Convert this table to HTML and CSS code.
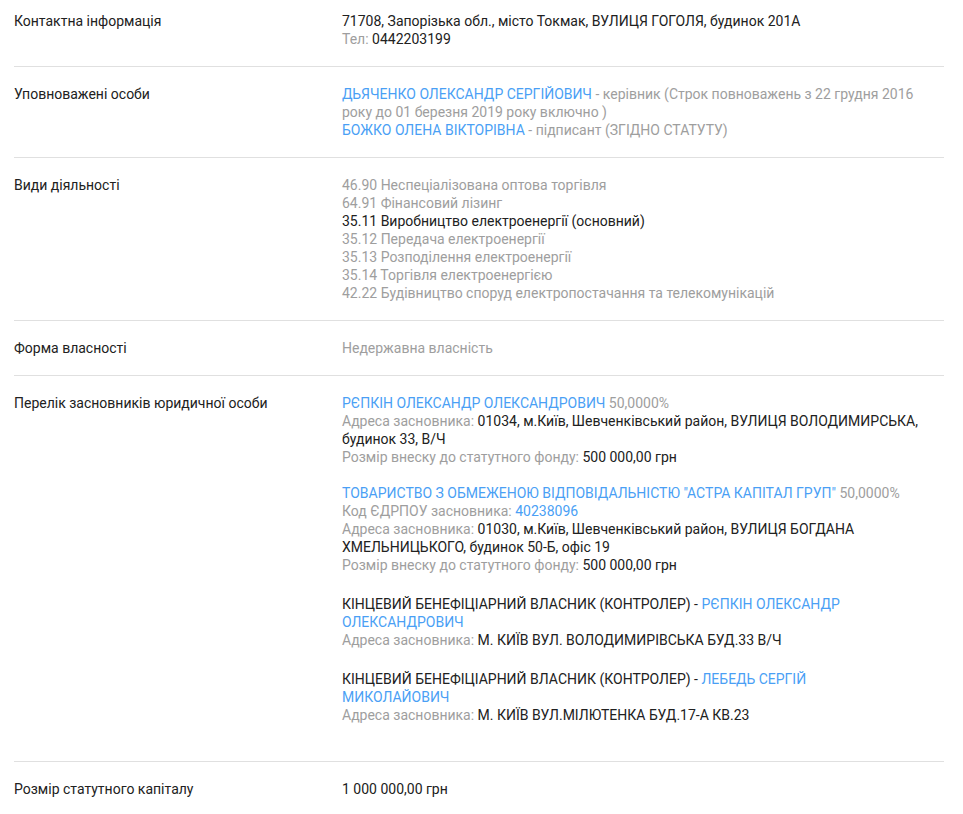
FILE: index.html
```html
<!DOCTYPE html>
<html lang="uk">
<head>
<meta charset="utf-8">
<title>Реєстраційні дані</title>
<link rel="stylesheet" href="styles.css">
</head>
<body>
<div class="table">
  <div class="row first">
    <div class="label">Контактна інформація</div>
    <div class="value">
      <div>71708, Запорізька обл., місто Токмак, ВУЛИЦЯ ГОГОЛЯ, будинок 201А</div>
      <div><span class="muted">Тел:</span> 0442203199</div>
    </div>
  </div>
  <div class="row">
    <div class="label">Уповноважені особи</div>
    <div class="value">
      <div><a class="link" href="#">ДЬЯЧЕНКО ОЛЕКСАНДР СЕРГІЙОВИЧ</a> <span class="muted">- керівник (Строк повноважень з 22 грудня 2016 року до 01 березня 2019 року включно )</span></div>
      <div><a class="link" href="#">БОЖКО ОЛЕНА ВІКТОРІВНА</a> <span class="muted">- підписант (ЗГІДНО СТАТУТУ)</span></div>
    </div>
  </div>
  <div class="row">
    <div class="label">Види діяльності</div>
    <div class="value muted">
      <div>46.90 Неспеціалізована оптова торгівля</div>
      <div>64.91 Фінансовий лізинг</div>
      <div class="main">35.11 Виробництво електроенергії (основний)</div>
      <div>35.12 Передача електроенергії</div>
      <div>35.13 Розподілення електроенергії</div>
      <div>35.14 Торгівля електроенергією</div>
      <div>42.22 Будівництво споруд електропостачання та телекомунікацій</div>
    </div>
  </div>
  <div class="row">
    <div class="label">Форма власності</div>
    <div class="value muted">Недержавна власність</div>
  </div>
  <div class="row">
    <div class="label">Перелік засновників юридичної особи</div>
    <div class="value">
      <div class="founder">
        <div><a class="link" href="#">РЄПКІН ОЛЕКСАНДР ОЛЕКСАНДРОВИЧ</a> <span class="muted">50,0000%</span></div>
        <div><span class="muted">Адреса засновника:</span> 01034, м.Київ, Шевченківський район, ВУЛИЦЯ ВОЛОДИМИРСЬКА, будинок 33, В/Ч</div>
        <div><span class="muted">Розмір внеску до статутного фонду:</span> 500 000,00 грн</div>
      </div>
      <div class="founder">
        <div><a class="link" href="#">ТОВАРИСТВО З ОБМЕЖЕНОЮ ВІДПОВІДАЛЬНІСТЮ "АСТРА КАПІТАЛ ГРУП"</a> <span class="muted">50,0000%</span></div>
        <div><span class="muted">Код ЄДРПОУ засновника:</span> <a class="link" href="#">40238096</a></div>
        <div><span class="muted">Адреса засновника:</span> 01030, м.Київ, Шевченківський район, ВУЛИЦЯ БОГДАНА ХМЕЛЬНИЦЬКОГО, будинок 50-Б, офіс 19</div>
        <div><span class="muted">Розмір внеску до статутного фонду:</span> 500 000,00 грн</div>
      </div>
      <div class="founder owner">
        <div class="owner-title">КІНЦЕВИЙ БЕНЕФІЦІАРНИЙ ВЛАСНИК (КОНТРОЛЕР) - <a class="link" href="#">РЄПКІН ОЛЕКСАНДР ОЛЕКСАНДРОВИЧ</a></div>
        <div><span class="muted">Адреса засновника:</span> М. КИЇВ ВУЛ. ВОЛОДИМИРІВСЬКА БУД.33 В/Ч</div>
      </div>
      <div class="founder owner">
        <div class="owner-title">КІНЦЕВИЙ БЕНЕФІЦІАРНИЙ ВЛАСНИК (КОНТРОЛЕР) - <a class="link" href="#">ЛЕБЕДЬ СЕРГІЙ МИКОЛАЙОВИЧ</a></div>
        <div><span class="muted">Адреса засновника:</span> М. КИЇВ ВУЛ.МІЛЮТЕНКА БУД.17-А КВ.23</div>
      </div>
    </div>
  </div>
  <div class="row">
    <div class="label">Розмір статутного капіталу</div>
    <div class="value">1 000 000,00 грн</div>
  </div>
</div>
</body>
</html>
```
FILE: styles.css
```css
html, body {
  margin: 0;
  padding: 0;
  background: #ffffff;
}
body {
  font-family: Roboto, "Liberation Sans", sans-serif;
  font-size: 14px;
  line-height: 18px;
  color: #212121;
}
.table {
  margin-left: 14px;
  width: 930px;
}
.row {
  display: flex;
  padding: 18px 0;
  border-bottom: 1px solid #e0e0e0;
}
.row.first {
  padding-top: 12px;
}
.label {
  width: 328px;
  flex: none;
}
.value {
  flex: 1;
  min-width: 0;
}
.muted {
  color: #9e9e9e;
}
.main {
  color: #212121;
}
.link {
  color: #4a9ff5;
  text-decoration: none;
}
.founder {
  margin-bottom: 18px;
}
.owner {
  padding-top: 3px;
}
.owner:last-child {
  margin-bottom: 19px;
}
.owner-title {
  max-width: 505px;
}
```
